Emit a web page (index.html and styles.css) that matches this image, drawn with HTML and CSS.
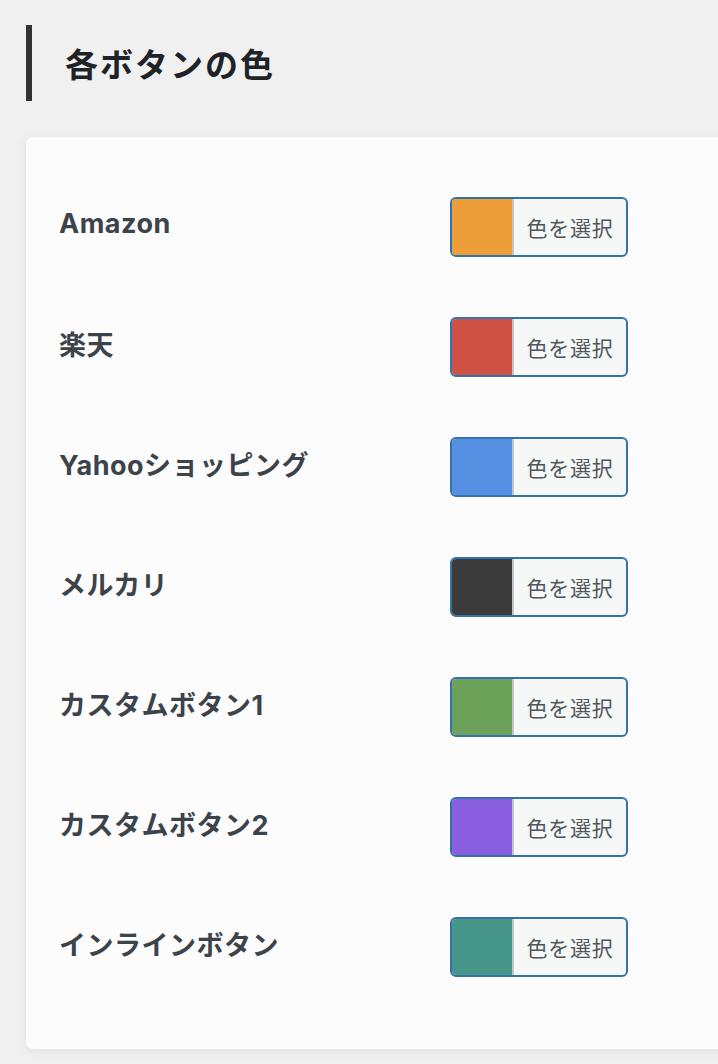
FILE: index.html
```html
<!DOCTYPE html>
<html lang="ja">
<head>
<meta charset="utf-8">
<title>各ボタンの色</title>
<link rel="stylesheet" href="styles.css">
</head>
<body>
<div class="page">
  <h2 class="section-title">各ボタンの色</h2>
  <div class="card">
    <div class="row">
      <div class="label">Amazon</div>
      <button class="picker"><span class="swatch" style="background:#ee9e39"></span><span class="pick-text">色を選択</span></button>
    </div>
    <div class="row">
      <div class="label">楽天</div>
      <button class="picker"><span class="swatch" style="background:#cf5044"></span><span class="pick-text">色を選択</span></button>
    </div>
    <div class="row">
      <div class="label">Yahooショッピング</div>
      <button class="picker"><span class="swatch" style="background:#5590e3"></span><span class="pick-text">色を選択</span></button>
    </div>
    <div class="row">
      <div class="label">メルカリ</div>
      <button class="picker"><span class="swatch" style="background:#3b3b3b"></span><span class="pick-text">色を選択</span></button>
    </div>
    <div class="row">
      <div class="label">カスタムボタン1</div>
      <button class="picker"><span class="swatch" style="background:#6ca15a"></span><span class="pick-text">色を選択</span></button>
    </div>
    <div class="row">
      <div class="label">カスタムボタン2</div>
      <button class="picker"><span class="swatch" style="background:#8a5fdf"></span><span class="pick-text">色を選択</span></button>
    </div>
    <div class="row">
      <div class="label">インラインボタン</div>
      <button class="picker"><span class="swatch" style="background:#47968a"></span><span class="pick-text">色を選択</span></button>
    </div>
  </div>
</div>
</body>
</html>
```
FILE: styles.css
```css
html, body {
  margin: 0;
  padding: 0;
  background: #f0f0f0;
  overflow: hidden;
}
body {
  font-family: Inter, "Noto Sans CJK JP", sans-serif;
  width: 718px;
  height: 1064px;
}
.page {
  padding: 25px 0 0 26px;
}
.section-title {
  margin: 0;
  height: 76px;
  border-left: 6px solid #333333;
  padding-left: 33px;
  display: flex;
  align-items: center;
  font-size: 33px;
  font-weight: 700;
  letter-spacing: 2px;
  color: #1d2327;
  box-sizing: border-box;
}
.card {
  margin-top: 36px;
  margin-right: -20px;
  background: #fcfcfc;
  border-radius: 7px;
  box-shadow: 0 2px 12px rgba(0, 0, 0, 0.07);
  padding: 60px 0 72px 33px;
  display: flex;
  flex-direction: column;
  gap: 60px;
  height: 912px;
  box-sizing: border-box;
}
.row {
  display: grid;
  grid-template-columns: 391px auto;
  align-items: center;
  height: 60px;
}
.label {
  font-size: 27px;
  font-weight: 700;
  letter-spacing: 0.5px;
  color: #3c434a;
  margin-bottom: 8px;
}
.picker {
  display: flex;
  width: 178px;
  height: 60px;
  padding: 0;
  margin: 0;
  border: 2px solid #3571aa;
  border-radius: 6px;
  background: #f6f7f7;
  overflow: hidden;
  box-sizing: border-box;
  font-family: inherit;
}
.swatch {
  width: 60px;
  height: 100%;
  border-right: 2px solid #c3c4c7;
  flex: none;
}
.pick-text {
  flex: 1;
  display: flex;
  align-items: center;
  justify-content: center;
  font-size: 21px;
  color: #50575e;
  letter-spacing: 0.8px;
}
```
